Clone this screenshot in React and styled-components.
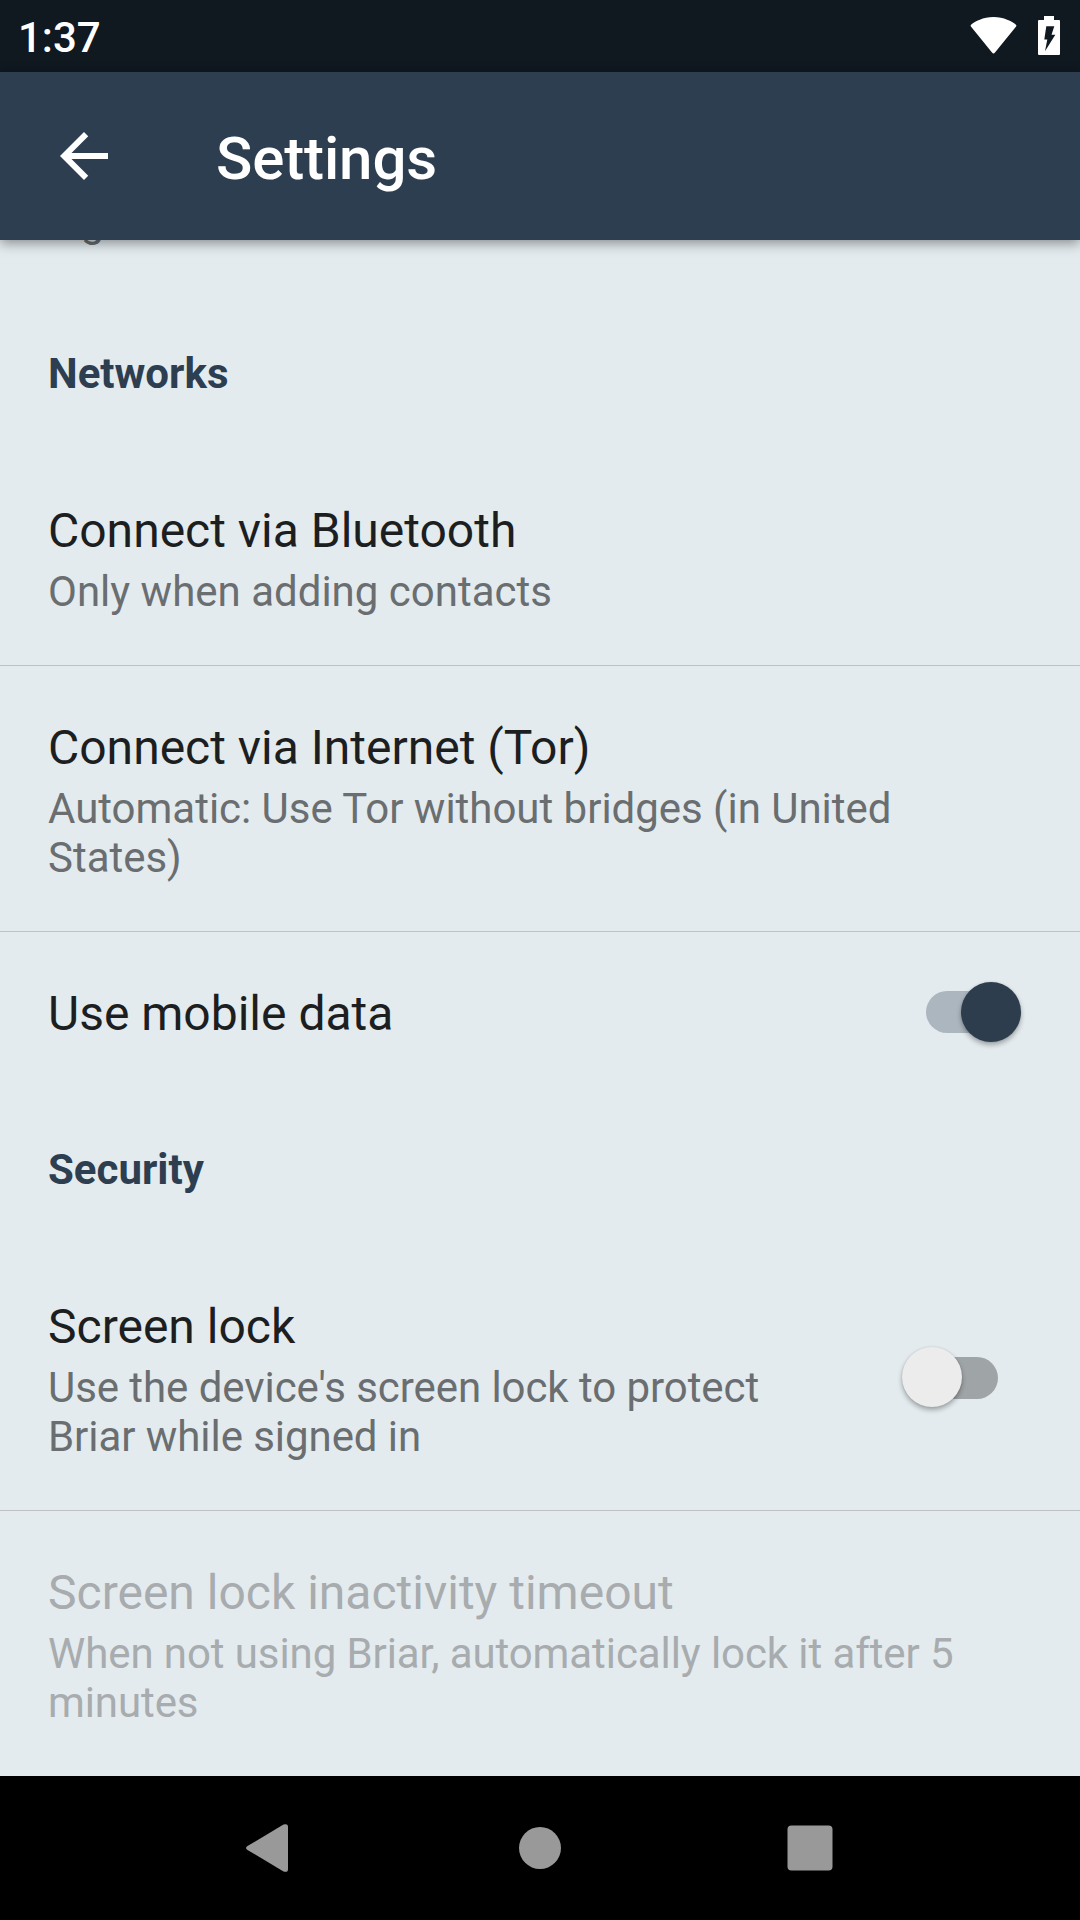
import React from "react";
import styled, { createGlobalStyle } from "styled-components";

const Global = createGlobalStyle`
  * { box-sizing: border-box; }
  body { margin: 0; background: #e3ebee; }
`;

const Screen = styled.div`
  display: flex;
  flex-direction: column;
  width: 1080px;
  height: 1920px;
  overflow: hidden;
  background: #e3ebee;
  font-family: Roboto, "Noto Sans", sans-serif;
`;

const StatusBar = styled.header`
  display: flex;
  flex: none;
  align-items: center;
  justify-content: space-between;
  height: 72px;
  padding: 2px 20px 0 18px;
  background: #101820;
  color: #fff;
`;

const Clock = styled.time`
  font-size: 42px;
  font-weight: 500;
  line-height: 49px;
`;

const StatusIcons = styled.div`
  display: flex;
  align-items: flex-start;
  gap: 21px;
  height: 40px;
  margin-bottom: 2px;
`;

const Toolbar = styled.div`
  display: flex;
  flex: none;
  align-items: center;
  position: relative;
  z-index: 1;
  height: 168px;
  padding-left: 48px;
  background: #2d3e50;
  color: #fff;
  box-shadow: 0 3px 12px rgba(0, 0, 0, 0.42);
`;

const BackButton = styled.button`
  display: flex;
  width: 168px;
  padding: 0;
  border: 0;
  background: none;
`;

const ToolbarTitle = styled.h1`
  margin: 5px 0 0;
  font-size: 60px;
  font-weight: 500;
  line-height: 70px;
  letter-spacing: -0.12px;
`;

const List = styled.main`
  display: flex;
  flex: 1;
  flex-direction: column;
  justify-content: flex-end;
  min-height: 0;
`;

const CategoryTitle = styled.h2`
  flex: none;
  margin: 0;
  padding: 53px 48px 51px;
  color: #2d3e50;
  font-size: 42px;
  font-weight: 700;
  line-height: 49px;
`;

const Row = styled.section`
  display: flex;
  flex: none;
  align-items: center;
  border-bottom: ${(p) => (p.$divided ? "1px solid #bec2c4" : "0")};
`;

const RowText = styled.div`
  flex: 1;
  padding: ${(p) => (p.$single ? "50px 0 46px 48px" : "50px 0 49px 48px")};
  margin-right: 48px;
  color: ${(p) => (p.$disabled ? "#a8acae" : "#1c1e1f")};
`;

const RowTitle = styled.div`
  font-size: 48px;
  line-height: 64px;
`;

const Summary = styled.div`
  margin-top: 4px;
  color: ${(p) => (p.$disabled ? "#a8acae" : "#6a6e70")};
  font-size: 42px;
  line-height: 49px;
  letter-spacing: ${(p) => p.$tracking || 0}px;
`;

const ScrolledRow = styled.section`
  flex: none;
  padding: 0 48px 50px;
`;

const Switch = styled.span`
  display: flex;
  position: relative;
  flex: none;
  width: 96px;
  height: 60px;
  padding: 10px 0 8px;
  margin: ${(p) => (p.$on ? "0 58px 2px 0" : "0 82px 1px 0")};
`;

const Track = styled.span`
  flex: 1;
  height: 42px;
  margin-right: ${(p) => (p.$on ? "8px" : "0")};
  margin-left: ${(p) => (p.$on ? "0" : "8px")};
  border-radius: 21px;
  background: ${(p) => (p.$on ? "#acb6bf" : "#9fa4a7")};
`;

const Thumb = styled.span`
  position: absolute;
  top: ${(p) => (p.$on ? "0.5px" : "0")};
  ${(p) => (p.$on ? "right: 1px" : "left: 0")};
  width: 60px;
  height: 60px;
  border-radius: 50%;
  background: ${(p) => (p.$on ? "#2d3d4e" : "#ececec")};
  box-shadow: 0 3px 5px rgba(0, 0, 0, 0.3), 0 0 2px rgba(0, 0, 0, 0.12);
`;

const NavBar = styled.nav`
  display: flex;
  flex: none;
  justify-content: center;
  gap: 150px;
  height: 144px;
  background: #000;
`;

const NavButton = styled.button`
  display: flex;
  align-items: center;
  justify-content: center;
  width: 120px;
  padding: 0;
  border: 0;
  background: none;
`;

function Toggle({ on }) {
  return (
    <Switch $on={on} role="switch" aria-checked={on}>
      <Track $on={on} />
      <Thumb $on={on} />
    </Switch>
  );
}

function Preference({ title, summary, tracking, disabled, divided, children }) {
  return (
    <Row $divided={divided}>
      <RowText $single={!summary} $disabled={disabled}>
        <RowTitle>{title}</RowTitle>
        {summary && (
          <Summary $disabled={disabled} $tracking={tracking}>
            {summary}
          </Summary>
        )}
      </RowText>
      {children}
    </Row>
  );
}

export default function App() {
  return (
    <Screen>
      <Global />
      <StatusBar>
        <Clock>1:37</Clock>
        <StatusIcons>
          <svg width="47" height="40" viewBox="0 0 47 40" fill="#fff">
            <path d="M23.5 1C13 1 5 5.5 1.3 8.5Q0 9.5 0.9 10.6L22 36.5Q23.5 38.3 25 36.5L46.1 10.6Q47 9.5 45.7 8.5C42 5.5 34 1 23.5 1Z" />
          </svg>
          <svg width="22" height="40" viewBox="0 0 22 40">
            <path fill="#fff" d="M6 0H16V4H21Q22 4 22 5V38Q22 39 21 39H1Q0 39 0 38V5Q0 4 1 4H6Z" />
            <path fill="#101820" d="M8.3 10.3H16.3L13.5 18.7H17.3L7 35.3L9.3 23.5H6.3Z" />
          </svg>
        </StatusIcons>
      </StatusBar>
      <Toolbar>
        <BackButton aria-label="Back">
          <svg width="72" height="72" viewBox="0 0 24 24" fill="#fff">
            <path d="M20 11H7.83l5.59-5.59L12 4l-8 8 8 8 1.41-1.41L7.83 13H20v-2z" />
          </svg>
        </BackButton>
        <ToolbarTitle>Settings</ToolbarTitle>
      </Toolbar>
      <List>
        <ScrolledRow>
          <Summary>Light</Summary>
        </ScrolledRow>
        <CategoryTitle>Networks</CategoryTitle>
        <Preference divided title="Connect via Bluetooth" summary="Only when adding contacts" />
        <Preference
          divided
          title="Connect via Internet (Tor)"
          summary="Automatic: Use Tor without bridges (in United States)"
          tracking={-0.02}
        />
        <Preference title="Use mobile data">
          <Toggle on />
        </Preference>
        <CategoryTitle>Security</CategoryTitle>
        <Preference
          divided
          title="Screen lock"
          summary="Use the device's screen lock to protect Briar while signed in"
          tracking={-0.06}
        >
          <Toggle on={false} />
        </Preference>
        <Preference
          disabled
          title="Screen lock inactivity timeout"
          summary="When not using Briar, automatically lock it after 5 minutes"
          tracking={-0.09}
        />
      </List>
      <NavBar>
        <NavButton aria-label="Back">
          <svg width="60" height="60" viewBox="0 0 60 60" fill="#999">
            <path d="M7.5 28L43.5 6.6Q48 5 48 9V51Q48 55 43.5 53.4L7.5 32Q4.5 30 7.5 28Z" />
          </svg>
        </NavButton>
        <NavButton aria-label="Home">
          <svg width="60" height="60" viewBox="0 0 60 60" fill="#999">
            <circle cx="30" cy="30" r="21" />
          </svg>
        </NavButton>
        <NavButton aria-label="Recent apps">
          <svg width="60" height="60" viewBox="0 0 60 60" fill="#999">
            <rect x="7.5" y="7.5" width="45" height="45" rx="4" />
          </svg>
        </NavButton>
      </NavBar>
    </Screen>
  );
}
